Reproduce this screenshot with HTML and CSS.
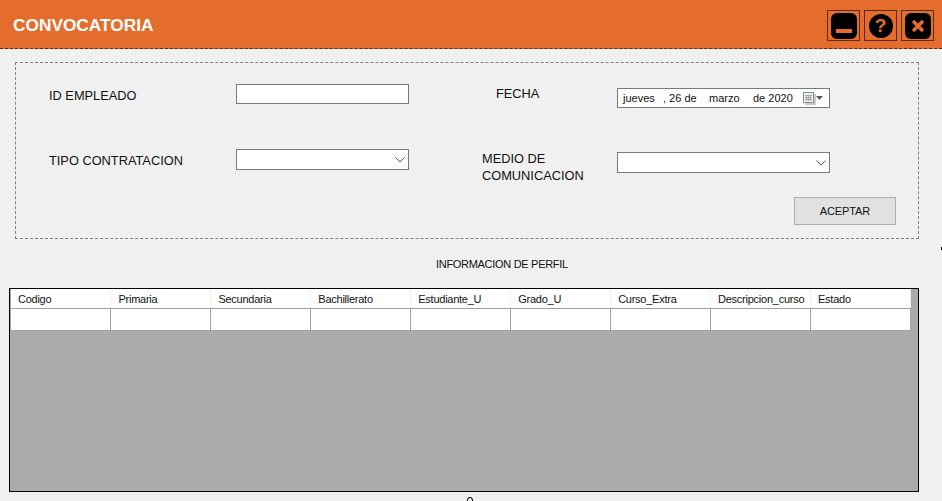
FILE: index.html
```html
<!DOCTYPE html>
<html lang="es">
<head>
  <meta charset="UTF-8" />
  <title>Convocatoria</title>
  <link rel="stylesheet" href="styles.css">
</head>
<body>
  <header class="title-bar">
    <h1 class="title">CONVOCATORIA</h1>
    <div class="window-buttons">
      <button class="win-btn" type="button" aria-label="Minimizar">
        <span class="win-icon"><span class="min-bar"></span></span>
      </button>
      <button class="win-btn" type="button" aria-label="Ayuda">
        <span class="win-icon round">?</span>
      </button>
      <button class="win-btn" type="button" aria-label="Cerrar">
        <span class="win-icon">
          <svg width="16" height="16" viewBox="0 0 16 16">
            <path d="M3 3 L13 13 M13 3 L3 13" stroke="#e46c2c" stroke-width="3.4" fill="none"/>
          </svg>
        </span>
      </button>
    </div>
  </header>

  <form class="panel">
    <div class="form-grid">
      <label class="lbl lbl-id" for="id_empleado">ID EMPLEADO</label>
      <input class="text-input" type="text" id="id_empleado" />
      <div class="lbl lbl-fecha">FECHA</div>
      <div class="date-picker">
        <span class="dp-day">jueves</span>
        <span class="dp-num">, 26 de</span>
        <span class="dp-month">marzo</span>
        <span class="dp-year">de 2020</span>
        <svg class="dp-icon" width="21" height="13" viewBox="0 0 21 13">
          <rect x="2" y="2" width="11" height="11" fill="#c8c8c8"/>
          <rect x="0.5" y="0.5" width="10" height="10" fill="#eef0f2" stroke="#868c94"/>
          <path d="M2 3.5h7M2 5.5h7M2 7.5h7M3.5 3v6M5.5 3v6M7.5 3v6" stroke="#a4a9b0" stroke-width="1" fill="none"/>
          <path d="M13 4 H20 L16.5 8 Z" fill="#4a5f7d"/>
        </svg>
      </div>

      <label class="lbl lbl-tipo" for="tipo">TIPO CONTRATACION</label>
      <div class="combo" id="tipo">
        <svg class="chevron" width="10" height="6" viewBox="0 0 10 6"><path d="M0.5 0.5 L5 5 L9.5 0.5" stroke="#555" fill="none"/></svg>
      </div>
      <label class="lbl lbl-medio" for="medio">MEDIO DE COMUNICACION</label>
      <div class="combo combo-medio" id="medio">
        <svg class="chevron" width="10" height="6" viewBox="0 0 10 6"><path d="M0.5 0.5 L5 5 L9.5 0.5" stroke="#555" fill="none"/></svg>
      </div>
    </div>
    <div class="actions">
      <button class="btn-accept" type="button">ACEPTAR</button>
    </div>
  </form>

  <h2 class="section-title">INFORMACION DE PERFIL</h2>

  <div class="data-grid">
    <table>
      <thead>
        <tr>
          <th>Codigo</th>
          <th>Primaria</th>
          <th>Secundaria</th>
          <th>Bachillerato</th>
          <th>Estudiante_U</th>
          <th>Grado_U</th>
          <th>Curso_Extra</th>
          <th>Descripcion_curso</th>
          <th>Estado</th>
        </tr>
      </thead>
      <tbody>
        <tr>
          <td></td><td></td><td></td><td></td><td></td><td></td><td></td><td></td><td></td>
        </tr>
      </tbody>
    </table>
  </div>

  <span class="stray-tick"></span>
  <span class="stray-dot"></span>
</body>
</html>
```

FILE: styles.css
```css
html, body {
  margin: 0;
  height: 501px;
  overflow: hidden;
}
body {
  position: relative;
  background: #f0f0f0;
  font-family: "Liberation Sans", Arial, sans-serif;
  color: #111;
}

.title-bar {
  height: 48px;
  background: #e46c2c;
  border-bottom: 1px dashed #5a2a12;
  display: flex;
  align-items: center;
  justify-content: space-between;
  padding: 0 8px 0 13px;
}
.title {
  margin: 3px 0 0;
  font-size: 17.3px;
  font-weight: bold;
  color: #fff;
}
.window-buttons {
  display: flex;
  gap: 4px;
  margin-top: 3px;
}
.win-btn {
  width: 33px;
  height: 31px;
  padding: 0;
  background: transparent;
  border: 1px solid #5a2a12;
  display: flex;
  align-items: center;
  justify-content: center;
}
.win-icon {
  width: 26px;
  height: 26px;
  background: #000;
  border-radius: 6px;
  display: flex;
  align-items: center;
  justify-content: center;
  color: #e46c2c;
  font-family: "Liberation Sans", Arial, sans-serif;
  font-size: 19px;
  font-weight: bold;
}
.win-icon.round {
  width: 24px;
  height: 24px;
  border-radius: 50%;
}
.min-bar {
  width: 16px;
  height: 4px;
  margin-top: 10px;
  background: #e46c2c;
}

.panel {
  margin: 13px 23px 0 15px;
  height: 154px;
  border: 1px dashed #808080;
  padding: 21px 0 0 33px;
}
.form-grid {
  display: grid;
  grid-template-columns: 187px 173px 208px 213px;
  grid-template-rows: 65px 48px;
}
.lbl {
  font-size: 12.8px;
  line-height: 15px;
}
.lbl-id {
  margin-top: 4px;
}
.lbl-fecha {
  margin: 2px 0 0 87px;
}
.lbl-tipo {
  margin-top: 4px;
}
.lbl-medio {
  width: 130px;
  margin: 1px 0 0 73px;
  line-height: 17px;
}
.text-input {
  width: 173px;
  height: 20px;
  box-sizing: border-box;
  margin: 0;
  border: 1px solid #7a7a7a;
  background: #fff;
}
.date-picker {
  height: 20px;
  margin-top: 4px;
  box-sizing: border-box;
  border: 1px solid #7a7a7a;
  background: #fff;
  font-size: 11px;
  line-height: 18px;
  display: flex;
  align-items: center;
  padding-left: 5px;
}
.dp-day { width: 40px; }
.dp-num { width: 46px; }
.dp-month { width: 44px; }
.dp-year { width: 50px; }
.dp-icon { flex: none; }
.combo {
  height: 21px;
  box-sizing: border-box;
  border: 1px solid #7a7a7a;
  background: #fff;
  display: flex;
  align-items: center;
  justify-content: flex-end;
  padding-right: 3px;
}
.combo-medio {
  margin-top: 3px;
}

.actions {
  display: flex;
  justify-content: flex-end;
  padding-right: 22px;
}
.btn-accept {
  width: 102px;
  height: 28px;
  padding: 0;
  background: #e1e1e1;
  border: 1px solid #adadad;
  font-family: "Liberation Sans", Arial, sans-serif;
  font-size: 11px;
  letter-spacing: -0.1px;
  color: #111;
}

.section-title {
  margin: 18px 0 0 436px;
  height: 31px;
  font-size: 11px;
  letter-spacing: -0.3px;
  font-weight: normal;
  line-height: 15px;
}

.data-grid {
  margin-left: 9px;
  width: 907px;
  height: 202px;
  background: #ababab;
  border: 1px solid #000;
  padding: 0 0 0 1px;
}
.data-grid table {
  width: 900px;
  table-layout: fixed;
  border-collapse: collapse;
  background: #fff;
  font-size: 11px;
  letter-spacing: -0.25px;
}
.data-grid th {
  height: 19px;
  padding: 0 0 0 7px;
  font-weight: normal;
  text-align: left;
  white-space: nowrap;
  overflow: hidden;
  border-right: 1px solid #f0f0f0;
  border-bottom: 1px solid #a0a0a0;
}
.data-grid td {
  height: 21px;
  padding: 0;
  border-right: 1px solid #a0a0a0;
  border-bottom: 1px solid #a0a0a0;
}

.stray-tick {
  position: absolute;
  left: 941px;
  top: 247px;
  width: 1px;
  height: 3px;
  background: #000;
}
.stray-dot {
  position: absolute;
  left: 467px;
  top: 497px;
  width: 4px;
  height: 6px;
  border: 1px solid #000;
  border-radius: 50%;
  background: #fff;
}
```
